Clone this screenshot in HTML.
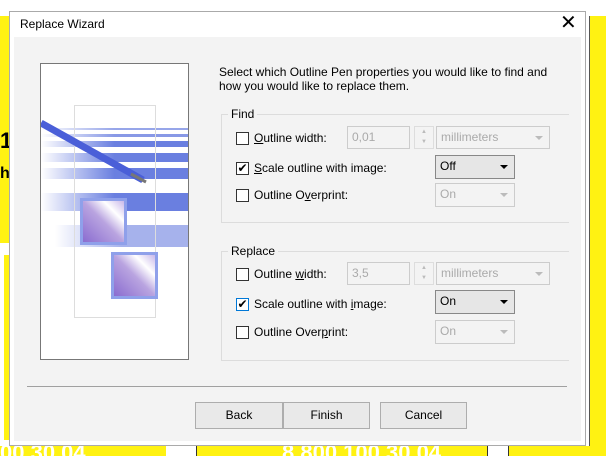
<!DOCTYPE html>
<html><head><meta charset="utf-8"><style>
*{box-sizing:border-box;margin:0;padding:0}
body{width:606px;height:456px;position:relative;overflow:hidden;background:#fff;font-family:"Liberation Sans",sans-serif;font-size:12px;color:#000}
.a{position:absolute}
.cb{position:absolute;width:13px;height:13px;border:1px solid #333;background:#fff}
.lbl{position:absolute;font-size:12px;white-space:nowrap}
.dis{position:absolute;border:1px solid #ccc;background:#f3f3f3;color:#aaa;font-size:12px;padding:3px 4px}
.combo{position:absolute;border:1px solid #888;background:#e6e6e6;font-size:12px;padding:3px 4px}
.arr{position:absolute;right:6px;top:9px;width:0;height:0;border-left:4px solid transparent;border-right:4px solid transparent;border-top:4px solid #000}
.arrd{border-top-color:#bbb}
.btn{position:absolute;top:402px;height:27px;border:1px solid #adadad;background:#e9e9e9;text-align:center;line-height:25px;font-size:12px}
.grp{position:absolute;border:1px solid #dcdcdc;border-right:none}
.gl{position:absolute;background:#f3f3f3;padding:0 3px;font-size:12px}
</style></head><body>
<div class="a" style="left:0;top:16px;width:9px;height:227px;background:#fff212"></div>
<div class="a" style="left:4px;top:255px;width:5px;height:185px;background:#fff212"></div>
<div class="a" style="left:0;top:128px;font-size:22px;font-weight:bold">1</div>
<div class="a" style="left:0;top:165px;font-size:16px;font-weight:bold">h</div>
<div class="a" style="left:589px;top:16px;width:17px;height:430px;background:#fff212;border-left:1px solid #555"></div>
<div class="a" style="left:0;top:446px;width:166px;height:10px;background:#fff212;overflow:hidden"><div style="color:#fff;font-size:22px;font-weight:bold;margin-top:-6px">00 30 04</div></div>
<div class="a" style="left:196px;top:446px;width:292px;height:10px;background:#fff212;border-left:1px solid #333;border-right:1px solid #333;overflow:hidden"><div style="color:#fff;font-size:22px;font-weight:bold;margin:-6px 0 0 85px">8 800 100 30 04</div></div>
<div class="a" style="left:508px;top:446px;width:98px;height:10px;background:#fff212;border-left:1px solid #333"></div>

<div class="a" style="left:9px;top:11px;width:577px;height:435px;background:#fff;border:1px solid #aaa"></div>
<div class="a" style="left:20px;top:17px;font-size:12px">Replace Wizard</div>
<div class="a" style="left:560px;top:10px;font-size:20px">✕</div>
<div class="a" style="left:14px;top:37px;width:567px;height:404px;background:#f3f3f3"></div>

<div class="a" style="left:40px;top:63px;width:149px;height:297px;background:#fff;border:1px solid #777;overflow:hidden">
<svg width="147" height="295" viewBox="41 64 147 295">
<defs><linearGradient id="g" x1="0" x2="1"><stop offset="0" stop-color="#6a7fe0" stop-opacity="0"/><stop offset=".5" stop-color="#6a7fe0"/><stop offset="1" stop-color="#6a7fe0"/></linearGradient>
<linearGradient id="q" x1="0" y1="1" x2="1" y2="0"><stop offset="0" stop-color="#8a6cd0"/><stop offset=".5" stop-color="#b9a4e0"/><stop offset=".75" stop-color="#fff"/><stop offset="1" stop-color="#c9b8ea"/></linearGradient></defs>
<rect x="41" y="128" width="147" height="2" fill="url(#g)" opacity=".7"/>
<rect x="41" y="134" width="147" height="3" fill="url(#g)" opacity=".8"/>
<rect x="41" y="141" width="147" height="6" fill="url(#g)"/>
<rect x="41" y="153" width="147" height="9" fill="url(#g)"/>
<rect x="41" y="168" width="147" height="11" fill="url(#g)"/>
<rect x="41" y="193" width="147" height="18" fill="url(#g)"/>
<rect x="55" y="225" width="133" height="22" fill="url(#g)" opacity=".6"/>
<rect x="74.5" y="105.5" width="81" height="212" fill="none" stroke="#ddd"/>
<line x1="41" y1="123" x2="143" y2="180" stroke="#4a5fd8" stroke-width="7"/>
<line x1="131" y1="174" x2="146" y2="182" stroke="#777" stroke-width="3"/>
<rect x="80" y="198" width="47" height="47" fill="#8fa0ea"/><rect x="83" y="201" width="41" height="41" fill="url(#q)"/>
<rect x="111" y="252" width="47" height="47" fill="#8fa0ea"/><rect x="114" y="255" width="41" height="41" fill="url(#q)"/>
</svg></div>

<div class="a" style="left:219px;top:65px;line-height:14px;font-size:12px">Select which Outline Pen properties you would like to find and<br>how you would like to replace them.</div>

<div class="grp" style="left:221px;top:114px;width:348px;height:109px"></div>
<div class="gl" style="left:228px;top:107px">Find</div>
<div class="cb" style="left:236px;top:132px"></div><div class="lbl" style="left:254px;top:131px"><u>O</u>utline width:</div>
<div class="dis" style="left:347px;top:126px;width:63px;height:23px">0,01</div>
<div class="a" style="left:414px;top:126px;width:20px;height:23px;border:1px solid #ddd;color:#bbb;font-size:6px;text-align:center;line-height:10px">▲<br>▼</div>
<div class="dis" style="left:436px;top:126px;width:114px;height:23px">millimeters<div class="arr arrd"></div></div>
<div class="cb" style="left:236px;top:162px;font-size:12px;line-height:11px;text-align:center">✔</div><div class="lbl" style="left:254px;top:161px"><u>S</u>cale outline with image:</div>
<div class="combo" style="left:435px;top:155px;width:80px;height:24px">Off<div class="arr"></div></div>
<div class="cb" style="left:236px;top:189px"></div><div class="lbl" style="left:254px;top:188px">Outline O<u>v</u>erprint:</div>
<div class="dis" style="left:435px;top:183px;width:80px;height:24px">On<div class="arr arrd"></div></div>

<div class="grp" style="left:221px;top:251px;width:348px;height:110px"></div>
<div class="gl" style="left:228px;top:244px">Replace</div>
<div class="cb" style="left:236px;top:268px"></div><div class="lbl" style="left:254px;top:267px">Outline <u>w</u>idth:</div>
<div class="dis" style="left:347px;top:262px;width:63px;height:23px">3,5</div>
<div class="a" style="left:414px;top:262px;width:20px;height:23px;border:1px solid #ddd;color:#bbb;font-size:6px;text-align:center;line-height:10px">▲<br>▼</div>
<div class="dis" style="left:436px;top:262px;width:114px;height:23px">millimeters<div class="arr arrd"></div></div>
<div class="cb" style="left:236px;top:298px;border-color:#0078d7;line-height:11px;text-align:center">✔</div><div class="lbl" style="left:254px;top:297px">Scale outline with <u>i</u>mage:</div>
<div class="combo" style="left:435px;top:290px;width:80px;height:24px">On<div class="arr"></div></div>
<div class="cb" style="left:236px;top:326px"></div><div class="lbl" style="left:254px;top:325px">Outline Over<u>p</u>rint:</div>
<div class="dis" style="left:435px;top:320px;width:80px;height:24px">On<div class="arr arrd"></div></div>

<div class="a" style="left:27px;top:386px;width:540px;height:1px;background:#a0a0a0"></div>
<div class="btn" style="left:195px;width:88px">Back</div>
<div class="btn" style="left:283px;width:87px">Finish</div>
<div class="btn" style="left:380px;width:87px">Cancel</div>
</body></html>
